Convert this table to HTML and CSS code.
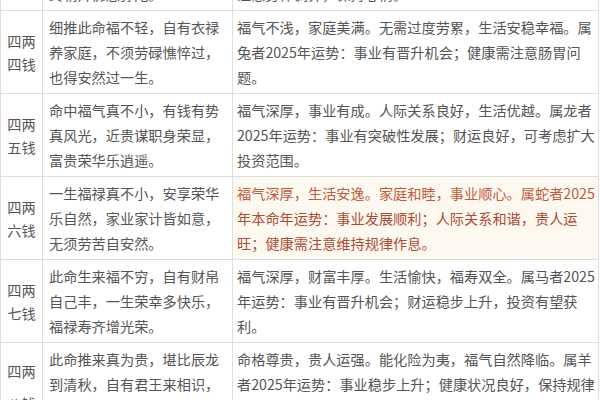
FILE: index.html
```html
<!DOCTYPE html>
<html lang="zh-CN">
<head>
<meta charset="utf-8">
<link rel="stylesheet" href="styles.css">
</head>
<body>
<div class="viewport">
<table class="fortune">
  <tr>
    <td class="weight">四两<br>三钱</td>
    <td class="poem">此命福气果如何，僧道门中<br>衣禄多，离祖出家方得妙，<br>终朝拜佛念弥陀。</td>
    <td class="detail">福气一般，宜修身养性。心态平和，生活安稳知足。属兔<br>者2025年运势：事业平稳发展；财运一般，宜稳健理财<br>注意身体调养，保持心情。</td>
  </tr>
  <tr>
    <td class="weight">四两<br>四钱</td>
    <td class="poem">细推此命福不轻，自有衣禄<br>养家庭，不须劳碌憔悴过，<br>也得安然过一生。</td>
    <td class="detail">福气不浅，家庭美满。无需过度劳累，生活安稳幸福。属<br>兔者2025年运势：事业有晋升机会；健康需注意肠胃问<br>题。</td>
  </tr>
  <tr>
    <td class="weight">四两<br>五钱</td>
    <td class="poem">命中福气真不小，有钱有势<br>真风光，近贵谋职身荣显，<br>富贵荣华乐逍遥。</td>
    <td class="detail">福气深厚，事业有成。人际关系良好，生活优越。属龙者<br>2025年运势：事业有突破性发展；财运良好，可考虑扩大<br>投资范围。</td>
  </tr>
  <tr>
    <td class="weight">四两<br>六钱</td>
    <td class="poem">一生福禄真不小，安享荣华<br>乐自然，家业家计皆如意，<br>无须劳苦自安然。</td>
    <td class="detail highlight">福气深厚，生活安逸。家庭和睦，事业顺心。属蛇者2025<br><span class="deep">年本命年运势：事业发展顺利；人际关系和谐，贵人运</span><br><span class="deep">旺；健康需注意维持规律作息。</span></td>
  </tr>
  <tr>
    <td class="weight">四两<br>七钱</td>
    <td class="poem">此命生来福不穷，自有财帛<br>自己丰，一生荣幸多快乐，<br>福禄寿齐增光荣。</td>
    <td class="detail">福气深厚，财富丰厚。生活愉快，福寿双全。属马者2025<br>年运势：事业有晋升机会；财运稳步上升，投资有望获<br>利。</td>
  </tr>
  <tr>
    <td class="weight weight-wide">四两<br>八钱</td>
    <td class="poem">此命推来真为贵，堪比辰龙<br>到清秋，自有君王来相识，<br>衣禄丰盈福自来。</td>
    <td class="detail">命格尊贵，贵人运强。能化险为夷，福气自然降临。属羊<br>者2025年运势：事业稳步上升；健康状况良好，保持规律<br>作息。</td>
  </tr>
</table>
</div>
</body>
</html>
```

FILE: styles.css
```css
html, body {
  margin: 0;
  padding: 0;
  background: #ffffff;
}

.viewport {
  width: 600px;
  height: 400px;
  overflow: hidden;
}

.fortune {
  border-collapse: collapse;
  table-layout: fixed;
  width: 599px;
  margin-top: -73px;
  font-family: "Noto Sans CJK SC", "Noto Sans", sans-serif;
  font-size: 14.2px;
  color: #555555;
}

.fortune td {
  border: 1px solid #dedede;
  white-space: nowrap;
  overflow: hidden;
}

.weight {
  width: 41px;
  text-align: center;
  vertical-align: middle;
  line-height: 23px;
  padding: 2px 0 0 0;
}

.weight-wide {
  line-height: 32px;
  padding-top: 6px;
}

.poem {
  width: 183px;
  vertical-align: top;
  line-height: 25px;
  padding: 4px 0 3px 6px;
}

.detail {
  vertical-align: top;
  line-height: 25px;
  padding: 4px 0 3px 4px;
}

.highlight {
  background: #fdf8f0;
  color: #c05c3c;
}

.highlight .deep {
  color: #ad4c35;
}
```
